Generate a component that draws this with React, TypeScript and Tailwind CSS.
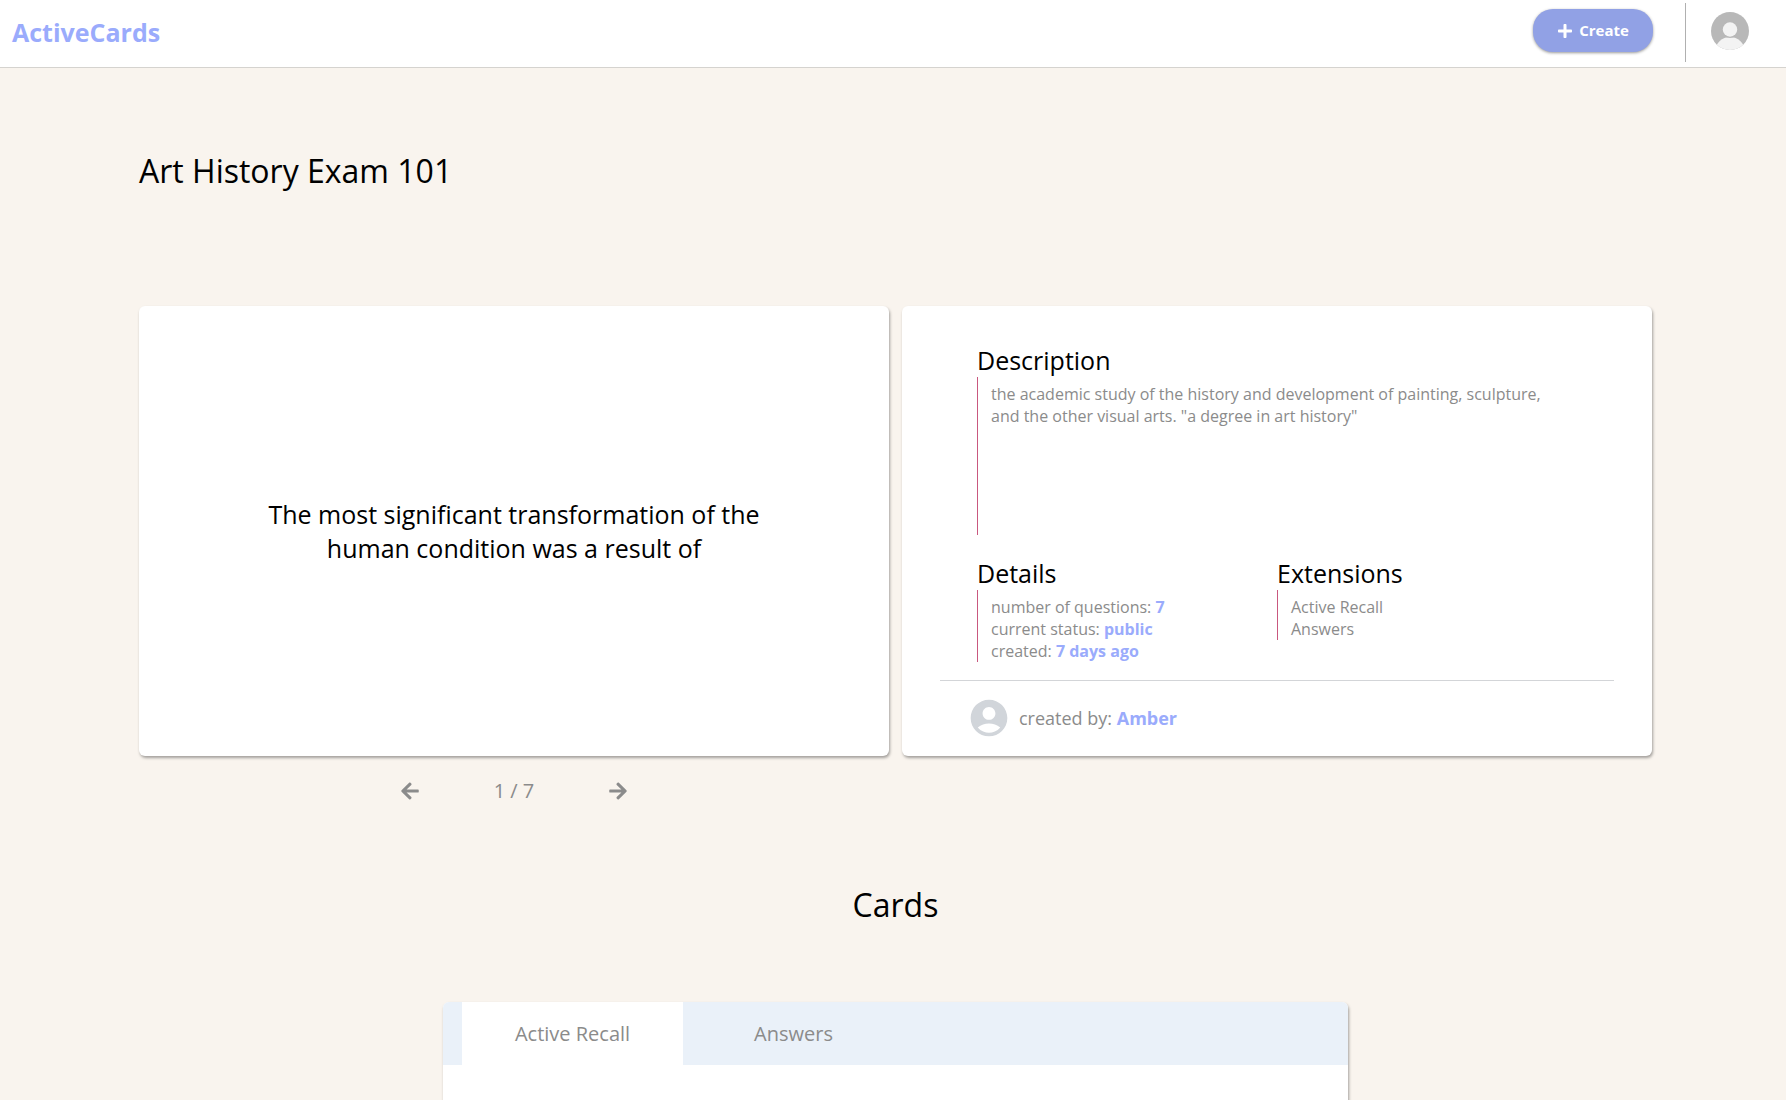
import { useState, type ReactNode } from "react";
import { FaArrowLeft, FaArrowRight, FaPlus } from "react-icons/fa";
import { MdAccountCircle } from "react-icons/md";

const cardShadow = "shadow-[1px_2px_3px_rgba(0,0,0,0.35)]";

function Accent({ children }: { children: ReactNode }) {
  return <span className="font-bold text-[#9aabfc]">{children}</span>;
}

function Section({ title, children, className = "" }: { title: string; children: ReactNode; className?: string }) {
  return (
    <section className="flex-1">
      <h2 className="pt-0.5 text-[25px] leading-[34px] text-black">{title}</h2>
      <div className={`border-l border-[#c9587f] pt-[6px] pl-[13px] text-base leading-[22px] text-[#8b8b8b] ${className}`}>
        {children}
      </div>
    </section>
  );
}

function UserAvatar() {
  return (
    <svg viewBox="0 0 38 38" className="size-[38px]" aria-hidden="true">
      <defs>
        <clipPath id="avatar-clip">
          <circle cx="19" cy="19" r="19" />
        </clipPath>
      </defs>
      <g clipPath="url(#avatar-clip)">
        <rect width="38" height="38" fill="#b8b8b8" />
        <ellipse cx="19" cy="38.5" rx="14.5" ry="13.5" fill="#f3f3f3" />
        <circle cx="19" cy="17.5" r="8.6" fill="#b8b8b8" />
        <circle cx="19" cy="17.5" r="7.2" fill="#f3f3f3" />
      </g>
    </svg>
  );
}

export default function App() {
  const [index, setIndex] = useState(1);
  const [tab, setTab] = useState("Active Recall");
  const total = 7;

  return (
    <div className="h-screen overflow-hidden bg-[#f9f4ee] font-['Open_Sans',sans-serif]">
      <header className="flex h-[68px] items-start justify-between border-b border-[#d5d3cf] bg-white pr-[37px] pl-3">
        <a href="#" className="pt-[15px] text-[25px] leading-[34px] font-bold text-[#9aabfc]">
          ActiveCards
        </a>
        <div className="flex items-start pt-[3px]">
          <button
            type="button"
            className="mt-[6px] flex h-[43px] w-[120px] items-center justify-center gap-[6px] rounded-[20px] bg-[#91a1e5] text-[15px] font-bold text-white shadow-[0_1px_3px_rgba(0,0,0,0.4)]"
          >
            <FaPlus className="size-4" />
            Create
          </button>
          <div className="ml-8 h-[59px] w-px bg-[#b0b0b0]" />
          <button type="button" aria-label="Account" className="mt-[9px] ml-[25px]">
            <UserAvatar />
          </button>
        </div>
      </header>

      <main className="pl-[5px]">
        <div className="mx-auto w-full max-w-[1513px]">
          <h1 className="pt-20 text-[32px] leading-[46px] text-black">Art History Exam 101</h1>

          <div className="mt-28 grid grid-cols-2 gap-[13px]">
            <div>
              <div className={`flex h-[450px] items-center justify-center rounded-md bg-white ${cardShadow}`}>
                <p className="w-[520px] text-center text-[25px] leading-[34px] text-black">
                  The most significant transformation of the human condition was a result of
                </p>
              </div>
              <div className="mt-5 flex items-center justify-center gap-[74px] text-xl leading-[30px] text-[#8b8b8b]">
                <button type="button" aria-label="Previous card" onClick={() => setIndex(Math.max(1, index - 1))}>
                  <FaArrowLeft className="size-5" />
                </button>
                <span>
                  {index} / {total}
                </span>
                <button type="button" aria-label="Next card" onClick={() => setIndex(Math.min(total, index + 1))}>
                  <FaArrowRight className="size-5" />
                </button>
              </div>
            </div>

            <div className={`h-[450px] rounded-md bg-white px-[38px] pt-[35px] ${cardShadow}`}>
              <div className="px-[37px]">
                <Section title="Description" className="h-[158px] pr-6">
                  <p>
                    the academic study of the history and development of painting, sculpture, and the other visual arts.
                    "a degree in art history"
                  </p>
                </Section>
                <div className="mt-[19px] flex h-[110px]">
                  <Section title="Details">
                    <p>
                      number of questions: <Accent>7</Accent>
                    </p>
                    <p>
                      current status: <Accent>public</Accent>
                    </p>
                    <p>
                      created: <Accent>7 days ago</Accent>
                    </p>
                  </Section>
                  <Section title="Extensions">
                    <p>Active Recall</p>
                    <p>Answers</p>
                  </Section>
                </div>
              </div>
              <div className="mt-4 flex items-center border-t border-[#d3d5d8] pt-[15px] pl-[27px] text-lg leading-[25px] text-[#8b8b8b]">
                <MdAccountCircle className="size-11 text-[#d1d5da]" />
                <p className="pl-2">
                  created by: <Accent>Amber</Accent>
                </p>
              </div>
            </div>
          </div>

          <h2 className="mt-[76px] text-center text-[32px] leading-[46px] text-black">Cards</h2>

          <div className={`mx-auto mt-[74px] h-80 max-w-[905px] overflow-hidden rounded-md bg-white ${cardShadow}`}>
            <div role="tablist" className="flex h-[63px] bg-[#eaf1f9] pl-[19px]">
              {["Active Recall", "Answers"].map((name) => (
                <button
                  key={name}
                  type="button"
                  role="tab"
                  aria-selected={tab === name}
                  onClick={() => setTab(name)}
                  className={`w-[221px] text-xl text-[#8b8b8b] ${tab === name ? "bg-white" : ""}`}
                >
                  {name}
                </button>
              ))}
            </div>
          </div>
        </div>
      </main>
    </div>
  );
}
